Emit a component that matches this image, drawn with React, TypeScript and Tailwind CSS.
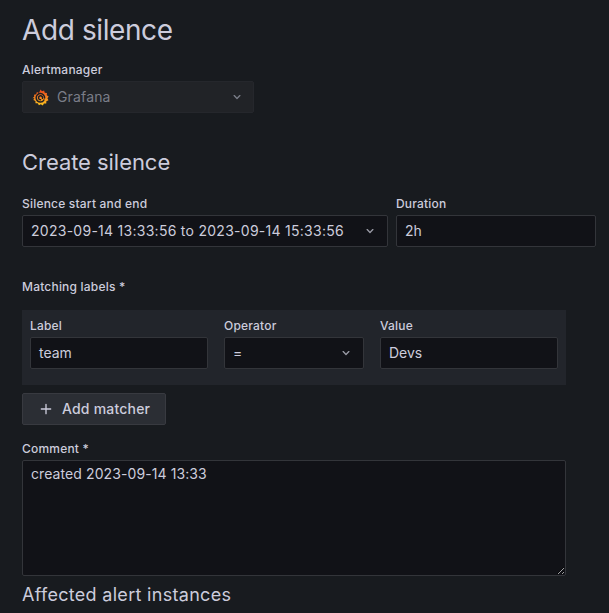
import React from "react";

function Chevron({ className }: { className: string }) {
  return (
    <svg className={className} width="16" height="16" viewBox="0 0 24 24" fill="currentColor">
      <path d="M17 9.17a1 1 0 0 0-1.41 0L12 12.71 8.46 9.17a1 1 0 1 0-1.41 1.42l4.24 4.24a1 1 0 0 0 1.42 0L17 10.59a1 1 0 0 0 0-1.42Z" />
    </svg>
  );
}

function GrafanaLogo() {
  return (
    <svg width="17" height="17" viewBox="0 0 16 16" className="shrink-0">
      <defs>
        <linearGradient id="g" x1="0" y1="1" x2="0" y2="0">
          <stop offset="0" stopColor="#fdc81f" />
          <stop offset="0.5" stopColor="#f7831f" />
          <stop offset="1" stopColor="#e5421d" />
        </linearGradient>
      </defs>
      <path
        fill="url(#g)"
        d="M8 .4l1.4 1.8 2-.8.6 2.1 2.1.2-.2 2.2 1.8 1.1-1.2 1.8 1 1.9-2 .9-.1 2.1-2.2-.1-1 1.9-1.9-1.2-1.8 1.1-1.1-2-2.1.1-.1-2.2-1.9-.9 1-1.9L.4 8.6l1.7-1.2L1.9 5.3l2.1-.3.6-2.1 2 .8L8 .4Z"
      />
      <path
        fill="none"
        stroke="#1d1f24"
        strokeWidth="1.4"
        strokeLinecap="round"
        d="M11.9 8.5A4 4 0 1 0 8 12.3a3.5 3.5 0 0 0 3.2-2M9.9 8.8A1.9 1.9 0 1 0 8 10.2"
      />
    </svg>
  );
}

function Label({ children }: { children: React.ReactNode }) {
  return (
    <div className="mb-1 h-[15px] text-xs font-medium leading-[15px] tracking-[0.2px] text-[#ccccdc]">{children}</div>
  );
}

function Input({ children, className }: { children: React.ReactNode; className: string }) {
  return (
    <div
      className={`flex h-8 items-center rounded-[2px] border border-[#33353a] bg-[#111217] px-2 text-sm text-[#ccccdc] ${className}`}
    >
      {children}
    </div>
  );
}

export default function App() {
  return (
    <div
      className="h-[613px] w-[609px] overflow-hidden bg-[#181b1f] pl-[22px] pr-[13px]"
      style={{ fontFamily: "Inter, 'Liberation Sans', sans-serif" }}
    >
      <h1 className="h-[62px] pt-[13px] text-[28px] leading-[34px] font-normal tracking-[-0.4px] text-[#ccccdc]">
        Add silence
      </h1>
      <Label>Alertmanager</Label>
      <div className="flex h-8 w-[232px] items-center rounded-[2px] border border-[#25272c] bg-[#212327] pr-[8px] pl-[9px] text-sm tracking-[0.15px] text-[#7a7d88]">
        <GrafanaLogo />
        <span className="ml-[8px] flex-1">Grafana</span>
        <Chevron className="text-[#7a7d88]" />
      </div>

      <h2 className="mt-9 h-[27px] text-[22px] leading-[27px] font-normal tracking-[-0.05px] text-[#ccccdc]">
        Create silence
      </h2>

      <div className="mt-5 flex gap-2">
        <div>
          <Label>Silence start and end</Label>
          <Input className="w-[366px] justify-between pr-[9px]">
            <span className="tracking-[0.27px]">2023-09-14 13:33:56 to 2023-09-14 15:33:56</span>
            <Chevron className="text-[#9a9ba6]" />
          </Input>
        </div>
        <div>
          <Label>Duration</Label>
          <Input className="w-[200px]">2h</Input>
        </div>
      </div>

      <div className="mt-8 h-[15px] text-xs font-medium leading-[15px] tracking-[0.2px] text-[#ccccdc]">
        Matching labels *
      </div>

      <div className="mt-4 flex h-[75px] w-[544px] gap-4 bg-[#22252b] px-2 pt-2">
        <div>
          <Label>Label</Label>
          <Input className="w-[178px]">team</Input>
        </div>
        <div>
          <Label>Operator</Label>
          <Input className="w-[140px] justify-between pr-[9px]">
            <span>=</span>
            <Chevron className="text-[#9a9ba6]" />
          </Input>
        </div>
        <div>
          <Label>Value</Label>
          <Input className="w-[178px]">Devs</Input>
        </div>
      </div>

      <button className="mt-2 flex h-8 w-[144px] items-center rounded-[2px] border border-[#383a40] bg-[#2b2e34] pl-[15px] text-sm font-medium tracking-[0.2px] text-[#ccccdc]">
        <svg width="16" height="16" viewBox="0 0 24 24" fill="currentColor" className="mr-2">
          <path d="M19 11h-6V5a1 1 0 0 0-2 0v6H5a1 1 0 0 0 0 2h6v6a1 1 0 0 0 2 0v-6h6a1 1 0 0 0 0-2Z" />
        </svg>
        Add matcher
      </button>

      <div className="mt-4">
        <Label>Comment *</Label>
        <textarea
          readOnly
          defaultValue="created 2023-09-14 13:33"
          className="block h-[116px] w-[544px] rounded-[2px] border border-[#33353a] bg-[#111217] px-2 py-[3px] text-sm leading-[20px] tracking-[0.09px] text-[#ccccdc] outline-none"
        />
      </div>

      <h3 className="mt-[7px] text-lg leading-[23px] font-normal tracking-[0.3px] text-[#ccccdc]">
        Affected alert instances
      </h3>
    </div>
  );
}
